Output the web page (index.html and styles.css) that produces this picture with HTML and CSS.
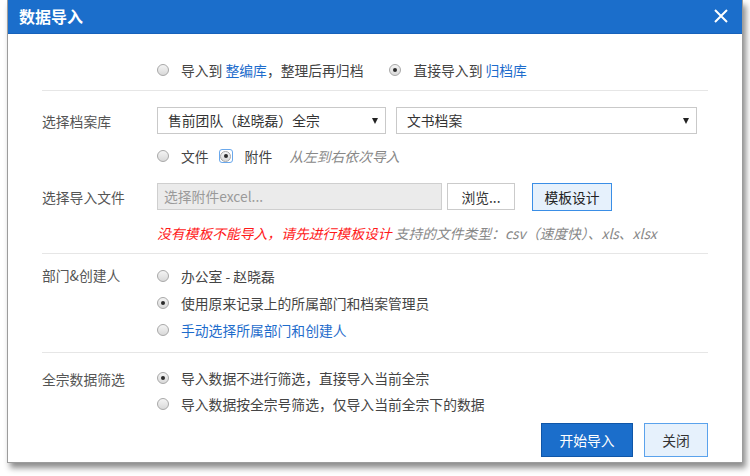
FILE: index.html
```html
<!DOCTYPE html>
<html lang="zh-CN">
<head>
<meta charset="utf-8">
<title>数据导入</title>
<link rel="stylesheet" href="styles.css">
</head>
<body>
<div class="dialog">
  <div class="header">
    <span class="title">数据导入</span>
    <svg class="close" width="14" height="14" viewBox="0 0 14 14"><path d="M1 1L13 13M13 1L1 13" stroke="#fff" stroke-width="2" fill="none"/></svg>
  </div>

  <div class="section s1">
    <div class="mode-row">
      <span class="opt"><span class="radio"></span><span class="txt">导入到 <span class="link">整编库</span>，整理后再归档</span></span>
      <span class="opt opt2"><span class="radio checked"></span><span class="txt">直接导入到 <span class="link">归档库</span></span></span>
    </div>
  </div>

  <div class="section s2">
    <div class="row sel-row">
      <div class="label">选择档案库</div>
      <div class="ctrl">
        <div class="select sel1">售前团队（赵晓磊）全宗<span class="arrow"></span></div>
        <div class="select sel2">文书档案<span class="arrow"></span></div>
      </div>
    </div>
    <div class="row sub-row">
      <div class="label"></div>
      <div class="ctrl">
        <span class="opt"><span class="radio"></span><span class="txt">文件</span></span>
        <span class="opt opt-att"><span class="focus"><span class="radio checked"></span></span><span class="txt">附件</span></span>
        <span class="hint">从左到右依次导入</span>
      </div>
    </div>
    <div class="row file-row">
      <div class="label">选择导入文件</div>
      <div class="ctrl">
        <div class="file-input">选择附件excel...</div>
        <div class="btn browse">浏览...</div>
        <div class="btn tpl">模板设计</div>
      </div>
    </div>
    <div class="row warn-row">
      <div class="label"></div>
      <div class="warn-line"><span class="warn">没有模板不能导入，请先进行模板设计</span> <span class="hint2">支持的文件类型：csv（速度快）、xls、xlsx</span></div>
    </div>
  </div>

  <div class="section s3">
    <div class="row">
      <div class="label">部门&amp;创建人</div>
      <div class="list">
        <div class="item"><span class="radio"></span><span class="txt">办公室 - 赵晓磊</span></div>
        <div class="item"><span class="radio checked"></span><span class="txt">使用原来记录上的所属部门和档案管理员</span></div>
        <div class="item"><span class="radio"></span><span class="txt link">手动选择所属部门和创建人</span></div>
      </div>
    </div>
  </div>

  <div class="section s4">
    <div class="row">
      <div class="label">全宗数据筛选</div>
      <div class="list">
        <div class="item"><span class="radio checked"></span><span class="txt">导入数据不进行筛选，直接导入当前全宗</span></div>
        <div class="item"><span class="radio"></span><span class="txt">导入数据按全宗号筛选，仅导入当前全宗下的数据</span></div>
      </div>
    </div>
    <div class="actions">
      <div class="btn primary">开始导入</div>
      <div class="btn closebtn">关闭</div>
    </div>
  </div>
</div>
</body>
</html>
```

FILE: styles.css
```css
* { box-sizing: border-box; }
html, body { margin: 0; padding: 0; background: #fff; }
body {
  font-family: "Noto Sans CJK SC", "Microsoft YaHei", sans-serif;
  font-size: 13.8px;
  color: #444;
  width: 750px;
  height: 476px;
  overflow: hidden;
}
.dialog {
  margin-left: 7px;
  width: 736px;
  background: #fff;
  border: 1px solid #9c9c9c;
  border-top: none;
  box-shadow: 3px 5px 6px rgba(0,0,0,0.45);
}
.header {
  height: 34px;
  background: #1b6ecb;
  border-bottom: 1px solid #1662bb;
  display: flex;
  align-items: center;
  justify-content: space-between;
  padding: 0 14px 0 11px;
}
.title {
  color: #fff;
  font-weight: bold;
  font-size: 16px;
  line-height: 20px;
  margin-top: -1px;
}
.close { margin-top: -2px; }

.section {
  margin: 0 34px;
  border-bottom: 1px solid #e6e6e6;
}
.s1 { padding: 26px 0 10px 115px; }
.s2 { padding: 16px 0 10px; }
.s3 { padding: 8px 0 9px; }
.s4 { padding: 12px 0 5px; border-bottom: none; }

.mode-row { display: flex; align-items: center; height: 20px; line-height: 20px; }
.opt { display: inline-flex; align-items: center; white-space: nowrap; }
.txt { white-space: pre; }
.opt2 { margin-left: 26px; }
.link { color: #1e6ccc; }

.radio {
  display: inline-block;
  width: 12px;
  height: 12px;
  border-radius: 50%;
  border: 1px solid #a8a8a8;
  background: linear-gradient(#f4f4f4, #d9d9d9);
  margin-right: 12px;
  position: relative;
  flex: none;
}
.radio.checked::after {
  content: "";
  position: absolute;
  left: 3px; top: 3px;
  width: 4px; height: 4px;
  border-radius: 50%;
  background: #2b2b2b;
}

.row { display: flex; align-items: center; }
.label { width: 115px; flex: none; color: #555; white-space: nowrap; }
.ctrl { display: flex; align-items: center; white-space: nowrap; }

.sel-row { height: 27px; }
.select {
  height: 27px;
  border: 1px solid #c9c9c9;
  background: #fff;
  color: #333;
  padding-left: 10px;
  line-height: 25px;
  position: relative;
}
.sel1 { width: 229px; }
.sel2 { width: 301px; margin-left: 10px; }
.arrow {
  position: absolute;
  right: 7px;
  top: 10px;
  width: 0; height: 0;
  border-left: 3.5px solid transparent;
  border-right: 3.5px solid transparent;
  border-top: 6px solid #222;
}

.sub-row { height: 20px; margin-top: 12px; line-height: 20px; }
.opt-att { margin-left: 10px; }
.focus {
  display: inline-flex;
  align-items: center;
  justify-content: center;
  width: 14px; height: 14px;
  border: 1px solid #6aa8ec;
  border-radius: 3px;
  margin-right: 12px;
}
.focus .radio { margin-right: 0; width: 11px; height: 11px; }
.focus .radio.checked::after { left: 2.5px; top: 2.5px; }
.hint { color: #888; font-style: italic; margin-left: 17px; }
.hint2 { color: #888; font-style: italic; }

.file-row { height: 27px; margin-top: 17px; }
.file-input {
  width: 285px;
  height: 27px;
  background: #ebebeb;
  border: 1px solid #cfcfcf;
  color: #9a9a9a;
  padding-left: 6px;
  line-height: 25px;
}
.btn {
  display: flex;
  align-items: center;
  justify-content: center;
  color: #333;
  white-space: nowrap;
}
.browse {
  width: 68px;
  height: 27px;
  margin-left: 5px;
  background: #fff;
  border: 1px solid #cbcbcb;
}
.tpl {
  width: 80px;
  height: 28px;
  margin-left: 17px;
  background: #e6f1fc;
  border: 1px solid #3a8ee6;
  color: #222;
}

.warn-row { height: 20px; margin-top: 13px; line-height: 20px; }
.warn-line { white-space: nowrap; }
.warn { color: #ff1a1a; font-style: italic; }

.s3 .row, .s4 .row { align-items: flex-start; }
.s3 .label { line-height: 27px; }
.s4 .label { line-height: 28px; }
.list { display: flex; flex-direction: column; }
.s3 .item { height: 27px; display: flex; align-items: center; white-space: nowrap; }
.s4 .item { height: 26px; display: flex; align-items: center; white-space: nowrap; }

.actions {
  display: flex;
  justify-content: flex-end;
  margin-top: 6px;
}
.primary {
  width: 92px;
  height: 34px;
  background: #1b6ecb;
  border: 1px solid #0f56a8;
  color: #fff;
}
.closebtn {
  width: 64px;
  height: 34px;
  margin-left: 11px;
  background: #e6f1fc;
  border: 1px solid #5aa2ec;
  color: #333;
}
```
